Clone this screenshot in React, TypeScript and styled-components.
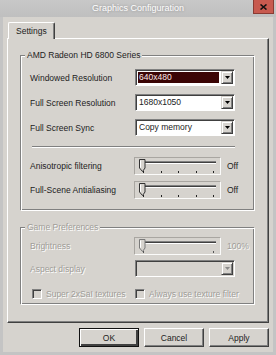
import React from "react";
import styled, { createGlobalStyle } from "styled-components";

const FACE = "#d6d3ce";
const SHADOW = "#808080";
const DARK = "#404040";
const GRAYTEXT = "#a09d98";

const GlobalStyle = createGlobalStyle`
  html, body {
    margin: 0;
    padding: 0;
  }
  body {
    width: 276px;
    height: 355px;
    overflow: hidden;
    background: #c4c4c4;
    font-family: "Liberation Sans", Arial, sans-serif;
    font-size: 8.5px;
    color: #222;
  }
`;

const Window = styled.div`
  width: 276px;
  height: 355px;
  display: flex;
  flex-direction: column;
  background: #c4c4c4;
`;

const TitleBar = styled.div`
  height: 17px;
  flex: none;
  display: grid;
  grid-template-columns: 1fr auto 1fr;
  align-items: start;
  background: linear-gradient(#c8c8c8, #bfbfbf);
`;

const Title = styled.div`
  grid-column: 2;
  line-height: 17px;
  font-size: 9px;
  color: #fff;
  text-shadow: 0 0 3px rgba(0, 0, 0, 0.3);
`;

const CloseButton = styled.div`
  grid-column: 3;
  justify-self: end;
  margin-right: 2px;
  width: 21px;
  height: 14px;
  box-sizing: border-box;
  border: 1px solid #8a3b33;
  border-top: none;
  background: #c85a4f;
  display: flex;
  align-items: center;
  justify-content: center;
`;

const Body = styled.div`
  flex: 1;
  display: flex;
  flex-direction: column;
  margin: 0 3px 3px;
  padding: 5px 4px;
  background: ${FACE};
`;

const TabStrip = styled.div`
  display: flex;
  padding-left: 1px;
`;

const Tab = styled.div`
  position: relative;
  z-index: 1;
  width: 47px;
  height: 17px;
  box-sizing: border-box;
  margin-bottom: -1px;
  padding-left: 7px;
  line-height: 17px;
  border: 1px solid #fff;
  border-bottom: none;
  border-right-color: ${DARK};
  box-shadow: inset -1px 0 ${SHADOW};
  border-radius: 2px 2px 0 0;
  background: ${FACE};
`;

const Panel = styled.div`
  flex: 1;
  display: flex;
  flex-direction: column;
  gap: 17px;
  padding: 16px 14px 0 12px;
  border: 1px solid #fff;
  border-right-color: ${DARK};
  border-bottom-color: ${DARK};
  box-shadow: inset -1px -1px ${SHADOW};
`;

const GroupBox = styled.section<{ $bottom: number }>`
  position: relative;
  display: flex;
  flex-direction: column;
  align-items: flex-start;
  padding: 0 18px ${(p) => p.$bottom}px 9px;
  border: 1px solid ${SHADOW};

  &::after {
    content: "";
    position: absolute;
    top: 0;
    left: 0;
    right: -2px;
    bottom: -2px;
    border: 1px solid #fff;
    pointer-events: none;
  }
`;

const Legend = styled.div<{ $disabled?: boolean }>`
  position: relative;
  z-index: 1;
  margin: -6px 0 0 -5px;
  padding: 0 2px;
  line-height: 10px;
  background: ${FACE};
  color: ${(p) => (p.$disabled ? GRAYTEXT : "inherit")};
  text-shadow: ${(p) => (p.$disabled ? "1px 1px 0 #fff" : "none")};
`;

const Row = styled.div<{ $top: number }>`
  display: flex;
  align-items: center;
  margin-top: ${(p) => p.$top}px;
`;

const Label = styled.span<{ $disabled?: boolean; $width?: number }>`
  width: ${(p) => p.$width ?? 105}px;
  flex: none;
  white-space: nowrap;
  color: ${(p) => (p.$disabled ? GRAYTEXT : "inherit")};
  text-shadow: ${(p) => (p.$disabled ? "1px 1px 0 #fff" : "none")};
`;

const Separator = styled.div`
  align-self: stretch;
  margin: 10px 0 0 2px;
  height: 0;
  border-top: 1px solid ${SHADOW};
  border-bottom: 1px solid #fff;
`;

const Combo = styled.div<{ $disabled?: boolean }>`
  width: 100px;
  height: 17px;
  box-sizing: border-box;
  display: flex;
  align-items: stretch;
  gap: 1px;
  padding: 1px;
  border: 1px solid;
  border-color: ${SHADOW} #fff #fff ${SHADOW};
  box-shadow: inset 1px 1px ${DARK};
  background: ${(p) => (p.$disabled ? FACE : "#fff")};
`;

const ComboValue = styled.div<{ $selected?: boolean }>`
  flex: 1;
  margin: 1px;
  padding-left: 1px;
  line-height: 11px;
  white-space: nowrap;
  background: ${(p) => (p.$selected ? "#3b0505" : "transparent")};
  color: ${(p) => (p.$selected ? "#fbe9e9" : "inherit")};
`;

const ArrowButton = styled.div`
  width: 12px;
  box-sizing: border-box;
  display: flex;
  align-items: center;
  justify-content: center;
  border: 1px solid;
  border-color: ${FACE} ${DARK} ${DARK} ${FACE};
  box-shadow: inset 1px 1px #fff, inset -1px -1px ${SHADOW};
  background: ${FACE};
`;

const Slider = styled.div`
  position: relative;
  width: 87px;
  height: 18px;
  box-sizing: border-box;
  padding: 3px 4px 0 7px;
  border: 1px solid;
  border-color: #a9a6a1 #fbfbfa #fbfbfa #a9a6a1;
  display: flex;
  flex-direction: column;
`;

const Track = styled.div`
  height: 3px;
  box-sizing: border-box;
  border-top: 1px solid ${SHADOW};
  border-bottom: 1px solid #fff;
  background: ${DARK};
`;

const Ticks = styled.div`
  display: flex;
  justify-content: space-between;
  margin: 7px 2px 0 1px;
`;

const Tick = styled.span<{ $disabled?: boolean }>`
  width: 1px;
  height: 2px;
  background: ${(p) => (p.$disabled ? "#555" : "#222")};
`;

const Thumb = styled.svg`
  position: absolute;
  left: 4px;
  top: 1px;
`;

const Value = styled.span<{ $disabled?: boolean }>`
  margin-left: 6px;
  color: ${(p) => (p.$disabled ? GRAYTEXT : "inherit")};
  text-shadow: ${(p) => (p.$disabled ? "1px 1px 0 #fff" : "none")};
`;

const CheckRow = styled.div`
  display: flex;
  align-items: center;
  margin: 10px 0 0 2px;
  height: 13px;
`;

const CheckItem = styled.label<{ $width?: number }>`
  display: flex;
  align-items: center;
  gap: 4px;
  width: ${(p) => (p.$width ? `${p.$width}px` : "auto")};
  white-space: nowrap;
  color: ${GRAYTEXT};
  text-shadow: 1px 1px 0 #fff;
`;

const CheckBox = styled.span`
  width: 10px;
  height: 10px;
  box-sizing: border-box;
  border: 1px solid;
  border-color: ${SHADOW} #fff #fff ${SHADOW};
  box-shadow: inset 1px 1px ${DARK};
  background: ${FACE};
`;

const ButtonRow = styled.div`
  display: flex;
  justify-content: flex-end;
  gap: 5px;
  margin-top: 5px;
`;

const Button = styled.div<{ $default?: boolean }>`
  width: 60px;
  height: 19px;
  box-sizing: border-box;
  display: flex;
  align-items: center;
  justify-content: center;
  border: 1px solid;
  border-color: ${(p) => (p.$default ? "#111" : `#fff ${DARK} ${DARK} #fff`)};
  box-shadow: ${(p) =>
    p.$default
      ? `inset 1px 1px #fff, inset -2px -2px ${DARK}, inset -1px -1px ${SHADOW}`
      : `inset -1px -1px ${SHADOW}`};
  background: ${FACE};
`;

const ThumbIcon: React.FC<{ disabled?: boolean }> = ({ disabled }) => (
  <Thumb width="7" height="13" viewBox="0 0 7 13">
    <path d="M0.5 0.5 H6 V9 L3.5 12.5 L0.5 9 Z" fill={FACE} stroke={disabled ? "#7a7a7a" : "#333"} strokeWidth="1" />
    <path d="M1.5 1.5 V8.7" stroke="#fff" strokeWidth="1" />
  </Thumb>
);

const SliderControl: React.FC<{ ticks: number; disabled?: boolean }> = ({ ticks, disabled }) => (
  <Slider>
    <Track />
    <Ticks>
      {Array.from({ length: ticks }).map((_, i) => (
        <Tick key={i} $disabled={disabled} />
      ))}
    </Ticks>
    <ThumbIcon disabled={disabled} />
  </Slider>
);

const ComboBox: React.FC<{ value?: string; selected?: boolean; disabled?: boolean }> = ({
  value,
  selected,
  disabled,
}) => (
  <Combo $disabled={disabled}>
    <ComboValue $selected={selected}>{value}</ComboValue>
    <ArrowButton>
      <svg width="5" height="3" viewBox="0 0 5 3">
        <path d="M0 0 H5 L2.5 3 Z" fill={disabled ? "#8a8a8a" : "#000"} />
      </svg>
    </ArrowButton>
  </Combo>
);

const App: React.FC = () => (
  <Window>
    <GlobalStyle />
    <TitleBar>
      <Title>Graphics Configuration</Title>
      <CloseButton>
        <svg width="7" height="6" viewBox="0 0 7 6">
          <path d="M0.5 0.5 L6.5 5.5 M6.5 0.5 L0.5 5.5" stroke="#111" strokeWidth="1.6" />
        </svg>
      </CloseButton>
    </TitleBar>
    <Body>
      <TabStrip>
        <Tab>Settings</Tab>
      </TabStrip>
      <Panel>
        <GroupBox $bottom={10}>
          <Legend>AMD Radeon HD 6800 Series</Legend>
          <Row $top={9}>
            <Label>Windowed Resolution</Label>
            <ComboBox value="640x480" selected />
          </Row>
          <Row $top={8}>
            <Label>Full Screen Resolution</Label>
            <ComboBox value="1680x1050" />
          </Row>
          <Row $top={8}>
            <Label>Full Screen Sync</Label>
            <ComboBox value="Copy memory" />
          </Row>
          <Separator />
          <Row $top={9}>
            <Label $width={104}>Anisotropic filtering</Label>
            <SliderControl ticks={5} />
            <Value>Off</Value>
          </Row>
          <Row $top={6}>
            <Label $width={104}>Full-Scene Antialiasing</Label>
            <SliderControl ticks={5} />
            <Value>Off</Value>
          </Row>
        </GroupBox>
        <GroupBox $bottom={3}>
          <Legend $disabled>Game Preferences</Legend>
          <Row $top={5}>
            <Label $width={104} $disabled>
              Brightness
            </Label>
            <SliderControl ticks={2} disabled />
            <Value $disabled>100%</Value>
          </Row>
          <Row $top={5}>
            <Label $disabled>Aspect display</Label>
            <ComboBox disabled />
          </Row>
          <CheckRow>
            <CheckItem $width={103}>
              <CheckBox />
              Super 2xSaI textures
            </CheckItem>
            <CheckItem>
              <CheckBox />
              Always use texture filter
            </CheckItem>
          </CheckRow>
        </GroupBox>
      </Panel>
      <ButtonRow>
        <Button $default>OK</Button>
        <Button>Cancel</Button>
        <Button>Apply</Button>
      </ButtonRow>
    </Body>
  </Window>
);

export default App;
